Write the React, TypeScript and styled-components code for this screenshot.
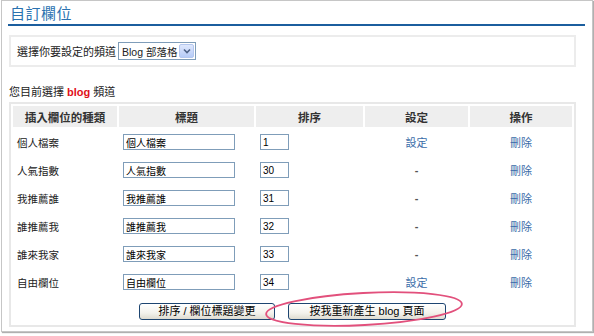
import React from "react";
import styled, { createGlobalStyle } from "styled-components";

const GlobalStyle = createGlobalStyle`
    html, body {
        margin: 0;
        padding: 0;
        background: #ffffff;
    }
    body {
        width: 594px;
        height: 336px;
        overflow: hidden;
        font-family: "Liberation Sans", "Noto Sans CJK TC", sans-serif;
        color: #222;
    }
`

const Frame = styled.div`
    position: relative;
    margin-left: 1px;
    width: 590px;
    height: 330px;
    border: 1px solid #c6c6c6;
    box-shadow: 1px 1px 1px #b0b0b0;
`
const TitleBar = styled.h2`
    margin: 0 7px 0 6px;
    padding: 3px 0 0 2px;
    height: 20px;
    line-height: 20px;
    font-size: 15px;
    font-weight: normal;
    letter-spacing: 0.5px;
    color: #2a72b0;
    border-bottom: 2px solid #1b5e9e;
`
const Body = styled.div`
    margin: 9px 0 0 7px;
    width: 567px;
`
const ChannelBox = styled.div`
    box-sizing: border-box;
    height: 32px;
    border: 2px solid #ececec;
    display: flex;
    align-items: center;
    gap: 2px;
    padding: 0 0 0 6px;
    font-size: 11px;
`
const FakeSelect = styled.div`
    box-sizing: border-box;
    flex: 0 0 78px;
    height: 18px;
    border: 1px solid #7f9db9;
    display: flex;
    align-items: center;
    justify-content: space-between;
    padding-left: 3px;
    font-size: 10.5px;
    white-space: nowrap;
    background: #fff;
`
const SelectArrow = styled.span`
    flex: 0 0 15px;
    height: 14px;
    margin-right: 1px;
    border-radius: 2px;
    background: linear-gradient(#dfe8fd, #b6cbf7);
    border: 1px solid #b4c7ef;
    box-sizing: border-box;
    display: flex;
    align-items: center;
    justify-content: center;
`
const Current = styled.p`
    margin: 18px 0 3px 0;
    line-height: 14px;
    font-size: 11px;
`
const Red = styled.b`
    color: #e0101a;
`
const Table = styled.table`
    width: 567px;
    table-layout: fixed;
    border: 2px solid #e8e8e8;
    border-spacing: 2px;
    font-size: 11px;
`
const Th = styled.th<{ $w: number }>`
    width: ${p => p.$w}px;
    height: 21px;
    padding: 0;
    background: #eeeeee;
    color: #333;
    font-size: 11.5px;
    font-weight: bold;
    text-align: center;
`
const Td = styled.td<{ $center?: boolean }>`
    height: 26px;
    padding: 0 0 0 ${p => (p.$center ? 0 : 4)}px;
    text-align: ${p => (p.$center ? "center" : "left")};
    vertical-align: middle;
`
const RowLabel = styled(Td)`
    font-size: 10.5px;
`
const TextBox = styled.input<{ $w: number }>`
    box-sizing: border-box;
    width: ${p => p.$w}px;
    height: 16px;
    border: 1px solid #7f9db9;
    padding: 0 2px;
    font-family: "Liberation Sans", "Noto Sans CJK TC", sans-serif;
    font-size: 10px;
    color: #000;
    outline: none;
`
const Link = styled.a`
    color: #3a6ca8;
    text-decoration: none;
    font-size: 11px;
`
const Dash = styled.span`
    color: #555;
    font-weight: bold;
`
const ButtonCell = styled.td`
    height: 24px;
    padding: 2px 0 0 0;
`
const ButtonRow = styled.div`
    display: flex;
    justify-content: center;
    gap: 13px;
`
const Button = styled.button<{ $w: number }>`
    box-sizing: border-box;
    width: ${p => p.$w}px;
    height: 17px;
    padding: 0;
    border: 1px solid #1d4571;
    border-radius: 3px;
    background: linear-gradient(#ffffff, #f3f2ec 60%, #dedbd0);
    font-family: "Liberation Sans", "Noto Sans CJK TC", sans-serif;
    font-size: 11px;
    line-height: 15px;
    color: #000;
`
const Circle = styled.svg`
    position: absolute;
    left: 258px;
    top: 283px;
`

const rows = [
    { kind: "個人檔案", title: "個人檔案", order: "1", setting: true },
    { kind: "人氣指數", title: "人氣指數", order: "30", setting: false },
    { kind: "我推薦誰", title: "我推薦誰", order: "31", setting: false },
    { kind: "誰推薦我", title: "誰推薦我", order: "32", setting: false },
    { kind: "誰來我家", title: "誰來我家", order: "33", setting: false },
    { kind: "自由欄位", title: "自由欄位", order: "34", setting: true },
]

const App = () => {
    return (
        <>
            <GlobalStyle />
            <Frame>
                <TitleBar>自訂欄位</TitleBar>
                <Body>
                    <ChannelBox>
                        <span>選擇你要設定的頻道</span>
                        <FakeSelect>
                            <span>Blog 部落格</span>
                            <SelectArrow>
                                <svg width="8" height="6" viewBox="0 0 8 6">
                                    <path d="M1 1.5 L4 4.5 L7 1.5" fill="none" stroke="#4d6185" strokeWidth="1.6" />
                                </svg>
                            </SelectArrow>
                        </FakeSelect>
                    </ChannelBox>
                    <Current>
                        您目前選擇 <Red>blog</Red> 頻道
                    </Current>
                    <Table>
                        <thead>
                            <tr>
                                <Th $w={104}>插入欄位的種類</Th>
                                <Th $w={135}>標題</Th>
                                <Th $w={107}>排序</Th>
                                <Th $w={103}>設定</Th>
                                <Th $w={102}>操作</Th>
                            </tr>
                        </thead>
                        <tbody>
                            {rows.map(r => (
                                <tr key={r.kind}>
                                    <RowLabel>{r.kind}</RowLabel>
                                    <Td>
                                        <TextBox $w={112} defaultValue={r.title} />
                                    </Td>
                                    <Td>
                                        <TextBox $w={29} defaultValue={r.order} />
                                    </Td>
                                    <Td $center>
                                        {r.setting ? <Link href="#">設定</Link> : <Dash>-</Dash>}
                                    </Td>
                                    <Td $center>
                                        <Link href="#">刪除</Link>
                                    </Td>
                                </tr>
                            ))}
                            <tr>
                                <ButtonCell colSpan={5}>
                                    <ButtonRow>
                                        <Button $w={136}>排序 / 欄位標題變更</Button>
                                        <Button $w={158}>按我重新產生 blog 頁面</Button>
                                    </ButtonRow>
                                </ButtonCell>
                            </tr>
                        </tbody>
                    </Table>
                </Body>
                <Circle width="212" height="50" viewBox="0 0 212 50">
                    <ellipse
                        cx="104"
                        cy="25"
                        rx="98"
                        ry="16"
                        transform="rotate(-3 104 25)"
                        fill="none"
                        stroke="#e2507c"
                        strokeWidth="1.8"
                    />
                </Circle>
            </Frame>
        </>
    )
}

export default App
